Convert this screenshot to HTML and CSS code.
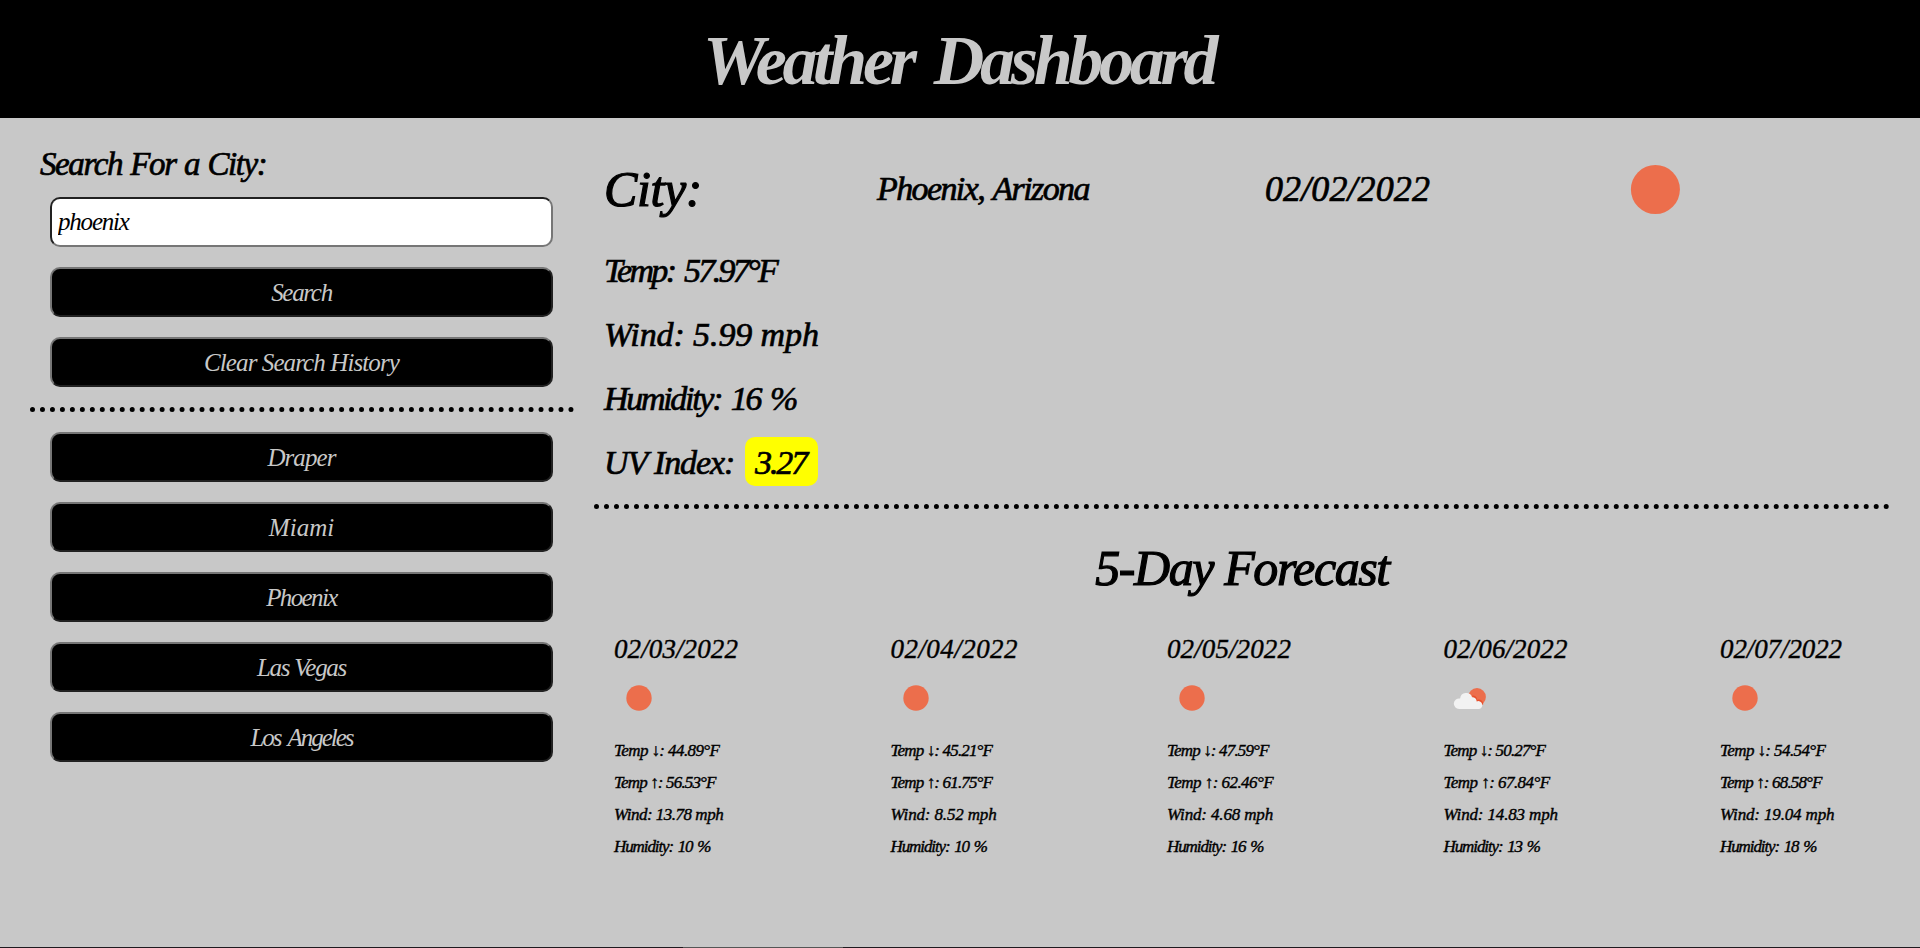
FILE: index.html
```
<!DOCTYPE html>
<html lang="en">
<head>
<meta charset="utf-8">
<title>Weather Dashboard</title>
<link rel="stylesheet" href="styles.css">
</head>
<body>
<header class="header"><h1 class="title">Weather Dashboard</h1></header>
<main class="main">
  <aside class="sidebar">
    <h2 class="search-label">Search For a City:</h2>
    <form class="controls">
      <input class="search-input" type="text" value="phoenix" aria-label="City">
      <button class="btn" type="button">Search</button>
      <button class="btn clear" type="button">Clear Search History</button>
    </form>
    <div class="dots"></div>
    <div class="controls history">
      <button class="btn draper" type="button">Draper</button>
      <button class="btn miami" type="button">Miami</button>
      <button class="btn phoenix" type="button">Phoenix</button>
      <button class="btn vegas" type="button">Las Vegas</button>
      <button class="btn angeles" type="button">Los Angeles</button>
    </div>
  </aside>
  <section class="content">
    <div class="current">
      <div class="city-row">
        <h2 class="city-label">City:</h2>
        <span class="city-name">Phoenix, Arizona</span>
        <span class="city-date">02/02/2022</span>
        <svg class="city-icon" viewBox="20 20 60 60"><circle cx="50.400" cy="50.500" r="24.500" fill="#ec6e4c"/></svg>
      </div>
      <p class="stat temp">Temp: 57.97°F</p>
      <p class="stat wind">Wind: 5.99 mph</p>
      <p class="stat humidity">Humidity: 16 %</p>
      <p class="stat uv"><span class="uv-label">UV Index:</span><span class="uv-badge">3.27</span></p>
    </div>
    <div class="dots"></div>
    <h2 class="forecast-title">5-Day Forecast</h2>
    <div class="forecast">
      <article class="day">
        <h3 class="day-date">02/03/2022</h3>
        <svg class="day-icon" viewBox="0 0 50 50"><circle cx="25" cy="25" r="12.7" fill="#ec6e4c"/></svg>
        <p class="low">Temp ↓: 44.89°F</p><p class="high">Temp ↑: 56.53°F</p><p class="day-wind">Wind: 13.78 mph</p><p class="day-hum">Humidity: 10 %</p>
      </article>
      <article class="day">
        <h3 class="day-date wide">02/04/2022</h3>
        <svg class="day-icon" viewBox="0 0 50 50"><circle cx="25" cy="25" r="12.7" fill="#ec6e4c"/></svg>
        <p class="low short">Temp ↓: 45.21°F</p><p class="high">Temp ↑: 61.75°F</p><p class="day-wind loose">Wind: 8.52 mph</p><p class="day-hum">Humidity: 10 %</p>
      </article>
      <article class="day">
        <h3 class="day-date">02/05/2022</h3>
        <svg class="day-icon" viewBox="0 0 50 50"><circle cx="25" cy="25" r="12.7" fill="#ec6e4c"/></svg>
        <p class="low short">Temp ↓: 47.59°F</p><p class="high loose">Temp ↑: 62.46°F</p><p class="day-wind loose">Wind: 4.68 mph</p><p class="day-hum">Humidity: 16 %</p>
      </article>
      <article class="day">
        <h3 class="day-date">02/06/2022</h3>
        <svg class="day-icon" viewBox="0 0 50 50">
          <circle cx="33" cy="24" r="8.900" fill="#ec6e4c"/>
          <path fill="#e8502c" d="M28 22.500a5 5 0 0 1 5.200 4.200 4.500 4.500 0 0 1 6 4.800L34 33Z"/>
          <path fill="#f2f2f2" d="M15.200 36a5.300 5.300 0 1 1 .9-10.500 6.200 6.200 0 0 1 12-1.300 4.300 4.300 0 0 1 4.600 4.200 4 4 0 1 1 2.300 7.600Z"/>
        </svg>
        <p class="low short">Temp ↓: 50.27°F</p><p class="high loose">Temp ↑: 67.84°F</p><p class="day-wind loose">Wind: 14.83 mph</p><p class="day-hum">Humidity: 13 %</p>
      </article>
      <article class="day">
        <h3 class="day-date narrow">02/07/2022</h3>
        <svg class="day-icon" viewBox="0 0 50 50"><circle cx="25" cy="25" r="12.7" fill="#ec6e4c"/></svg>
        <p class="low">Temp ↓: 54.54°F</p><p class="high">Temp ↑: 68.58°F</p><p class="day-wind loose">Wind: 19.04 mph</p><p class="day-hum">Humidity: 18 %</p>
      </article>
    </div>
  </section>
</main>
<footer class="bottom-edge"><div class="bottom-thumb"></div></footer>
</body>
</html>
```
FILE: styles.css
```
* { box-sizing: border-box; }
body {
  margin: 0;
  height: 948px;
  display: flex;
  flex-direction: column;
  overflow: hidden;
  background: #c8c8c8;
  color: #000;
  font-family: "Liberation Serif", serif;
  font-style: italic;
}
h1, h2, h3, p { margin: 0; font-weight: 400; white-space: nowrap; }
h2, .city-name, .city-date, .stat { -webkit-text-stroke: 0.7px currentColor; }

.header { height: 118px; background: #000; color: #c8c8c8; text-align: center; }
.title { padding-right: 3px; font-size: 70px; font-weight: 700; line-height: 121px; letter-spacing: -4.3px; word-spacing: 8px; }

.main { flex: 1; display: flex; min-height: 0; }
.sidebar { width: 574px; padding: 25px 0 0 30px; }
.search-label { padding-left: 10px; font-size: 33px; line-height: 42px; letter-spacing: -1.4px; word-spacing: 1.5px; }
.controls { display: flex; flex-direction: column; gap: 20px; padding: 12px 21px 20px 20px; }
.search-input, .btn {
  height: 50px;
  border-width: 2px;
  border-radius: 10px;
  font: italic 25px "Liberation Serif", serif;
}
.search-input { padding: 0 6px; border-style: inset; border-color: #767676; background: #fff; color: #000; letter-spacing: -1.2px; }
.btn { padding: 1px 0 0; border-style: outset; border-color: #767676; background: #000; color: #c8c8c8; letter-spacing: -1.3px; }
.clear { letter-spacing: -0.9px; }
.dots { border-top: 5px dotted #000; }
.history { padding-top: 20px; }
.draper { letter-spacing: -0.9px; }
.miami { letter-spacing: 0; }
.phoenix { letter-spacing: -1.6px; }
.angeles { letter-spacing: -2px; word-spacing: 3px; }

.content { width: 1296px; margin-left: 20px; padding-top: 40px; }
.current { padding: 0 10px 10px; }
.city-row { display: grid; grid-template-columns: 273px 388px 360px 60px; align-items: center; height: 60px; margin-bottom: 20px; }
.city-label { -webkit-text-stroke-width: 1.2px; font-size: 50px; line-height: 62px; letter-spacing: -0.4px; }
.city-name { font-size: 34px; letter-spacing: -1.6px; word-spacing: 2px; }
.city-date { font-size: 36px; letter-spacing: 0.1px; }
.city-icon { width: 60px; height: 60px; }
.stat { font-size: 34px; line-height: 66px; height: 64px; }
.temp { letter-spacing: -2.7px; word-spacing: 4px; }
.wind { letter-spacing: -0.1px; }
.humidity { letter-spacing: -2.3px; word-spacing: 3.5px; }
.uv { display: flex; align-items: flex-start; letter-spacing: -1.1px; }
.uv-label { width: 141px; }
.uv-badge { width: 73px; height: 49px; margin-top: 7px; padding-left: 10px; border-radius: 10px; background: #ff0; line-height: 52px; letter-spacing: -2.1px; }

.forecast-title { -webkit-text-stroke-width: 1.2px; margin-top: 29px; font-size: 50px; line-height: 60px; text-align: center; letter-spacing: -1.4px; }
.forecast { display: grid; grid-template-columns: repeat(5, 276.5px); margin-top: 31px; padding-left: 20px; }
.day { -webkit-text-stroke: 0.4px currentColor; }
.day-date { font-size: 27px; line-height: 41px; height: 40px; letter-spacing: 0.1px; }
.wide { letter-spacing: 0.45px; }
.narrow { letter-spacing: -0.1px; }
.day-icon { display: block; width: 50px; height: 50px; margin: 4px 0 12px; -webkit-text-stroke: 0; }
.day p { font-size: 17px; line-height: 32px; letter-spacing: -0.6px; }
.day .high, .day .short { letter-spacing: -0.85px; }
.day .day-hum { letter-spacing: -1.1px; word-spacing: 1.5px; }
.day .high.loose { letter-spacing: -0.55px; }
.day .day-wind { letter-spacing: -0.5px; }
.day .day-wind.loose { letter-spacing: -0.15px; }

.bottom-edge { height: 1px; background: #1f1a1f; }
.bottom-thumb { width: 160px; height: 1px; margin-left: 683px; background: #555; }
```
